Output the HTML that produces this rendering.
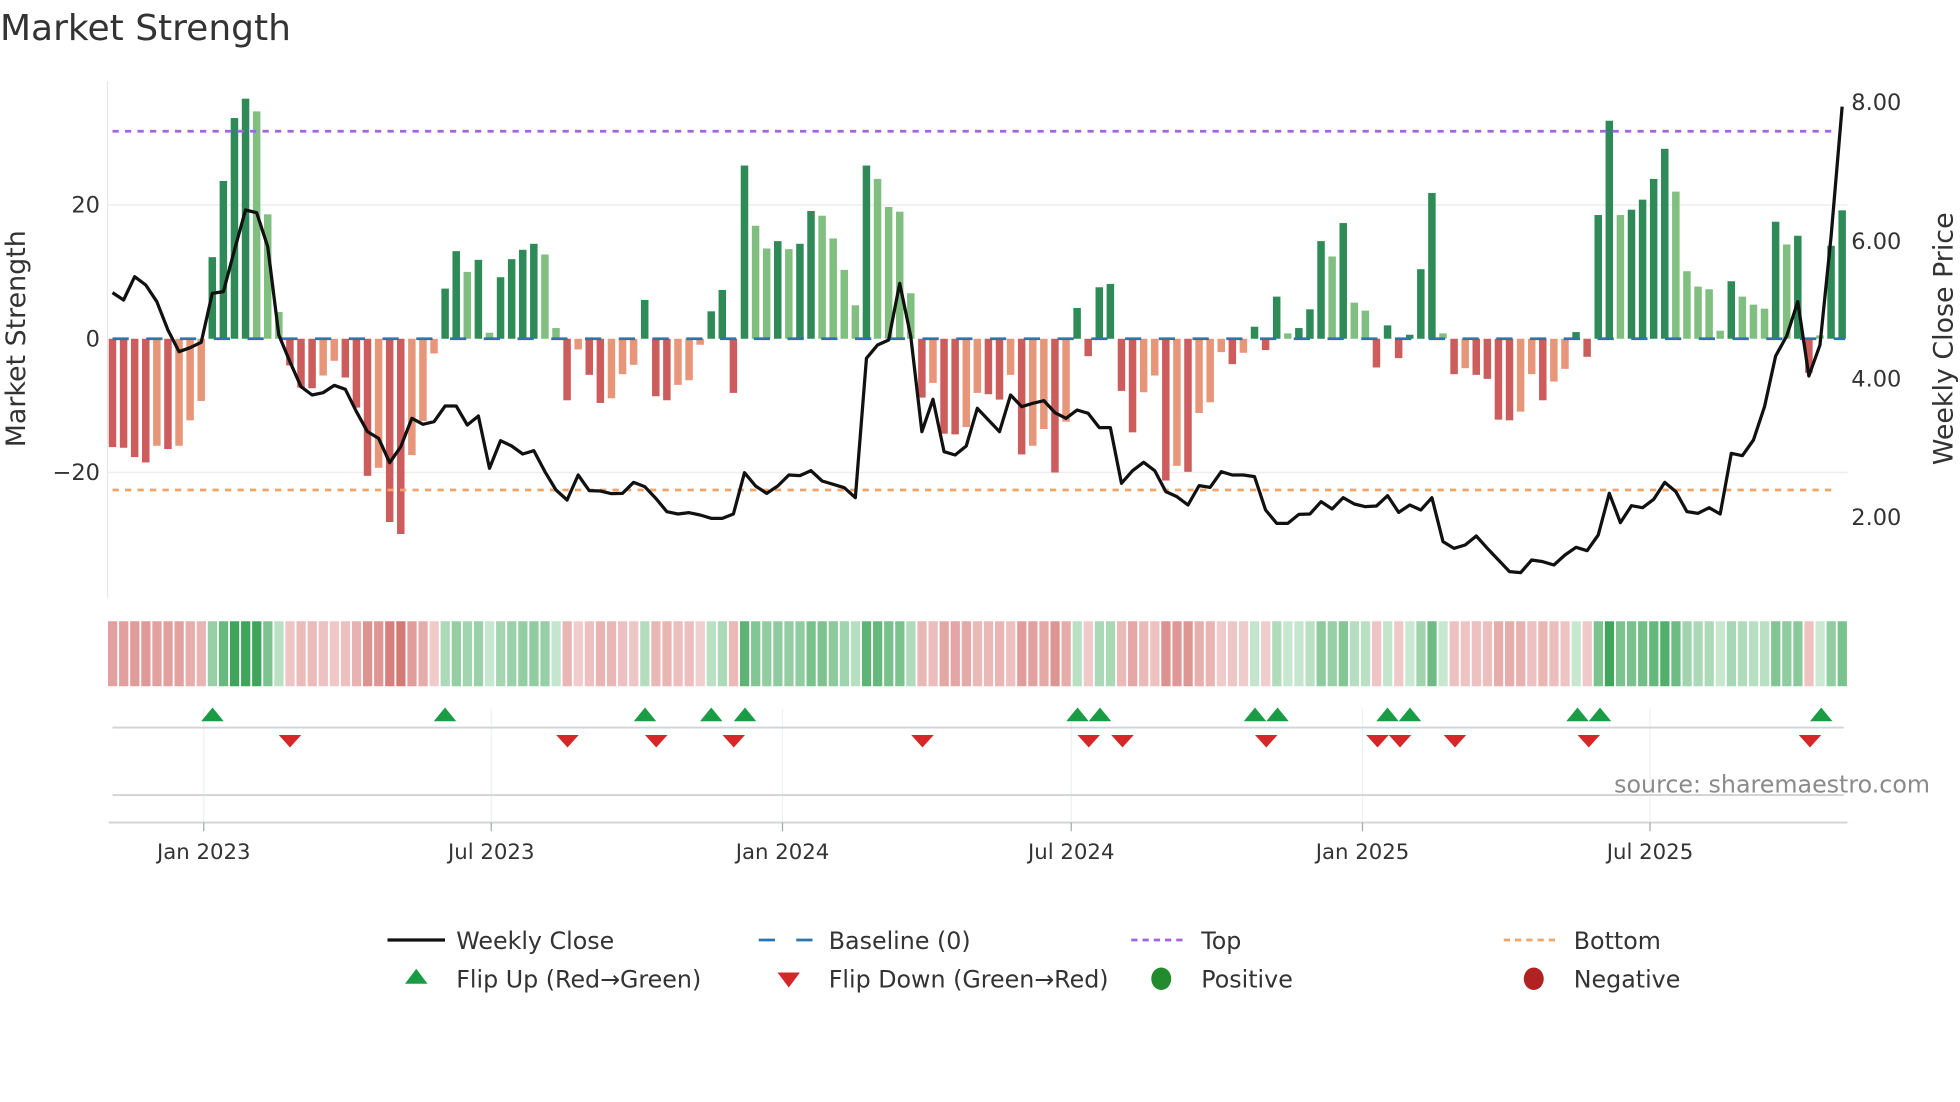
<!DOCTYPE html>
<html><head><meta charset="utf-8"><style>
html,body{margin:0;padding:0;background:#fff;width:1960px;height:1102px;overflow:hidden}
svg{display:block;font-family:"DejaVu Sans","Liberation Sans",sans-serif}
</style></head><body>
<svg id="s" width="1960" height="1102" viewBox="0 0 1568 881.6" xmlns="http://www.w3.org/2000/svg">
<rect width="1568" height="882" fill="#fff"/>
<text x="0" y="32" font-size="28.8" fill="#333">Market Strength</text>
<line x1="86" y1="65" x2="86" y2="478" stroke="#e6e6e6" stroke-width="1"/>
<line x1="86" y1="164" x2="1478" y2="164" stroke="#eeeeee" stroke-width="1.2"/>
<line x1="86" y1="378" x2="1478" y2="378" stroke="#eeeeee" stroke-width="1.2"/>
<g id="bars"></g>
<line x1="90" y1="105" x2="1470" y2="105" stroke="#a463e0" stroke-width="2.2" stroke-dasharray="5,5"/>
<line x1="90" y1="392" x2="1470" y2="392" stroke="#f0a467" stroke-width="2.2" stroke-dasharray="5,5"/>
<line x1="90" y1="271" x2="1476" y2="271" stroke="#2a75b0" stroke-width="2.2" stroke-dasharray="13,14"/>
<polyline id="price" fill="none" stroke="#111" stroke-width="2.6" stroke-linejoin="round"/>
<g font-size="18" fill="#333">
<text x="80" y="170" text-anchor="end">20</text>
<text x="80" y="277" text-anchor="end">0</text>
<text x="80" y="384" text-anchor="end">−20</text>
<text x="1481" y="88">8.00</text>
<text x="1481" y="199">6.00</text>
<text x="1481" y="309">4.00</text>
<text x="1481" y="420">2.00</text>
</g>
<text transform="translate(20,271) rotate(-90)" text-anchor="middle" font-size="21.5" fill="#333">Market Strength</text>
<text transform="translate(1562,271) rotate(-90)" text-anchor="middle" font-size="21.5" fill="#333">Weekly Close Price</text>
<g id="heat"></g>
<g stroke="#eef0f3" stroke-width="1">
<line x1="163" y1="567" x2="163" y2="660"/><line x1="393" y1="567" x2="393" y2="660"/>
<line x1="626" y1="567" x2="626" y2="660"/><line x1="857" y1="567" x2="857" y2="660"/>
<line x1="1090" y1="567" x2="1090" y2="660"/><line x1="1320" y1="567" x2="1320" y2="660"/>
</g>
<line x1="90" y1="582" x2="1475" y2="582" stroke="#d0d3d8" stroke-width="1.5"/>
<line x1="90" y1="636" x2="1475" y2="636" stroke="#d0d3d8" stroke-width="1.5"/>
<line x1="87" y1="658" x2="1478" y2="658" stroke="#d0d3d8" stroke-width="1.5"/>
<g stroke="#aaa" stroke-width="1">
<line x1="163" y1="658" x2="163" y2="665"/><line x1="393" y1="658" x2="393" y2="665"/>
<line x1="626" y1="658" x2="626" y2="665"/><line x1="857" y1="658" x2="857" y2="665"/>
<line x1="1090" y1="658" x2="1090" y2="665"/><line x1="1320" y1="658" x2="1320" y2="665"/>
</g>
<g id="marks"></g>
<text x="1544" y="634" text-anchor="end" font-size="19" fill="#8a8a8a">source: sharemaestro.com</text>
<g font-size="17" fill="#333" text-anchor="middle">
<text x="163" y="687">Jan 2023</text><text x="393" y="687">Jul 2023</text>
<text x="626" y="687">Jan 2024</text><text x="857" y="687">Jul 2024</text>
<text x="1090" y="687">Jan 2025</text><text x="1320" y="687">Jul 2025</text>
</g>
<g font-size="19" fill="#333">
<line x1="310" y1="752" x2="356" y2="752" stroke="#111" stroke-width="2.6"/>
<text x="365" y="759">Weekly Close</text>
<line x1="607" y1="752" x2="651" y2="752" stroke="#2a75b0" stroke-width="2.2" stroke-dasharray="13,17"/>
<text x="663" y="759">Baseline (0)</text>
<line x1="905" y1="752" x2="948" y2="752" stroke="#a463e0" stroke-width="2.2" stroke-dasharray="5,4"/>
<text x="961" y="759">Top</text>
<line x1="1203" y1="752" x2="1247" y2="752" stroke="#f0a467" stroke-width="2.2" stroke-dasharray="5,4"/>
<text x="1259" y="759">Bottom</text>
<polygon points="324,787 342,787 333,775" fill="#1a9c45"/>
<text x="365" y="790">Flip Up (Red→Green)</text>
<polygon points="622,778 640,778 631,790" fill="#d62728"/>
<text x="663" y="790">Flip Down (Green→Red)</text>
<ellipse cx="929" cy="783" rx="8" ry="9" fill="#228b2d"/>
<text x="961" y="790">Positive</text>
<ellipse cx="1227" cy="783" rx="8" ry="9" fill="#b22222"/>
<text x="1259" y="790">Negative</text>
</g>
</svg>
<script>
var NS="http://www.w3.org/2000/svg";
function el(t,a,p){var e=document.createElementNS(NS,t);for(var k in a)e.setAttribute(k,a[k]);p.appendChild(e);return e;}
var B="-16.2D -16.3D -17.7D -18.5D -16L -16.5D -16L -12.2L -9.3L 12.2G 23.6G 33G 35.9G 34g 18.6g 4g -4D -7.3D -7.4D -5.5L -3.3L -5.8D -10.3D -20.5D -19.3L -27.4D -29.2D -17.4L -12.3L -2.2L 7.5G 13.1G 10g 11.8G 0.9g 9.2G 11.9G 13.3G 14.2G 12.6g 1.6g -9.2D -1.6L -5.4D -9.6D -8.9L -5.3L -3.9L 5.8G -8.6D -9.2D -6.9L -6.2L -0.9L 4.1G 7.3G -8.1D 25.9G 16.9g 13.5g 14.6G 13.4g 14.2G 19.1G 18.4g 15g 10.3g 5g 25.9G 23.9g 19.7g 19g 6.8g -8.8D -6.6L -14.2D -14.3D -13.2L -8.1L -8.3D -9.1D -5.4L -17.3D -16L -13.5L -20D -12.4L 4.6G -2.6D 7.7G 8.2G -7.8D -14D -8L -5.5L -21.2D -19L -19.9D -11.1L -9.5L -2L -3.8D -2.1L 1.8G -1.7D 6.3G 0.8g 1.6G 4.4G 14.6G 12.3g 17.3G 5.4g 4.2g -4.3D 2G -2.9D 0.6G 10.4G 21.8G 0.8g -5.3D -4.4L -5.4D -6D -12.1D -12.2D -10.9L -5.3L -9.2D -6.4L -4.5L 1G -2.7D 18.5G 32.6G 18.5g 19.3G 20.8G 23.9G 28.4G 22g 10.1g 7.8g 7.4g 1.2g 8.6G 6.3g 5.1g 4.5g 17.5G 14.1g 15.4G -5.1D 0.5g 13.9G 19.2G".split(" ");
var P=[638,660,590,615,665,750,815,803,787,640,635,510,390,398,500,765,845,920,945,938,916,928,995,1055,1075,1148,1100,1015,1033,1025,978,978,1035,1008,1165,1082,1098,1122,1112,1175,1230,1260,1185,1232,1233,1241,1240,1207,1220,1255,1295,1302,1298,1305,1315,1315,1302,1178,1218,1240,1218,1185,1187,1172,1203,1213,1223,1253,835,795,780,610,770,1055,958,1115,1125,1098,985,1020,1055,945,980,970,962,998,1015,990,1000,1043,1043,1210,1172,1147,1172,1235,1250,1275,1217,1222,1175,1185,1185,1190,1290,1330,1330,1303,1302,1265,1287,1253,1272,1280,1278,1247,1297,1275,1290,1253,1385,1405,1395,1368,1405,1440,1475,1478,1440,1445,1455,1425,1402,1412,1365,1240,1328,1277,1283,1258,1207,1235,1295,1300,1283,1302,1120,1127,1080,980,828,768,665,888,795,470,80];
var col={D:"#cd5c5c",L:"#e8967a",G:"#2e8b57",g:"#80bf80"};
var bars=document.getElementById("bars"),heat=document.getElementById("heat");
function mix(a,b,t){return "rgb("+[0,1,2].map(function(i){return Math.round(a[i]+(b[i]-a[i])*t)}).join(",")+")";}
for(var i=0;i<B.length;i++){
 var s=B[i],c=s.slice(-1),v=parseFloat(s),x=90+8.87*i;
 var h=Math.abs(v)*5.35,y=v>=0?271-h:271;
 el("rect",{x:(x-3).toFixed(2),y:y.toFixed(2),width:6,height:Math.max(h,0.5).toFixed(2),fill:col[c]},bars);
 var t=Math.min(1,0.08+Math.abs(v)/36);
 var f=v>=0?mix([216,239,222],[62,165,90],t):mix([245,218,218],[208,110,106],t);
 el("rect",{x:(x-3.6).toFixed(2),y:497,width:7.4,height:52,fill:f},heat);
}
var pts=P.map(function(z,i){return (90+8.87*i).toFixed(2)+","+(64+z/3.75).toFixed(2)}).join(" ");
document.getElementById("price").setAttribute("points",pts);
var m=document.getElementById("marks");
[170,356,516,569,596,862,880,1004,1022,1110,1128,1262,1280,1457].forEach(function(x){el("polygon",{points:(x-9)+",577 "+(x+9)+",577 "+x+",566",fill:"#1a9c45"},m)});
[232,454,525,587,738,871,898,1013,1102,1120,1164,1271,1448].forEach(function(x){el("polygon",{points:(x-9)+",588 "+(x+9)+",588 "+x+",598",fill:"#d62728"},m)});
</script>
</body></html>
